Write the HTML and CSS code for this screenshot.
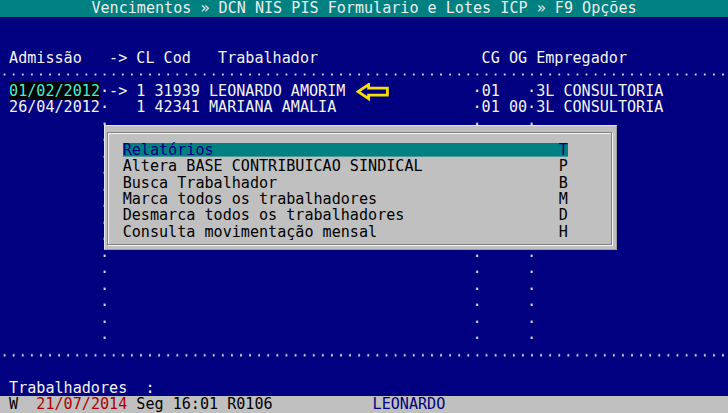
FILE: index.html
```html
<!DOCTYPE html>
<html lang="pt">
<head>
<meta charset="utf-8">
<title>Vencimentos</title>
<link rel="stylesheet" href="styles.css">
</head>
<body>
<div class="screen">
<div class="row title">Vencimentos » DCN NIS PIS Formulario e Lotes ICP » F9 Opções</div>
<div class="row"> </div>
<div class="row"> </div>
<div class="row"> Admissão   -&gt; CL Cod   Trabalhador                  CG OG Empregador</div>
<div class="row rule"></div>
<div class="row"> <span class="sel-date">01/02/2012</span>·-&gt; 1 31939 LEONARDO AMORIM              ·01   ·3L CONSULTORIA</div>
<div class="row"> 26/04/2012·   1 42341 MARIANA AMALIA               ·01 00·3L CONSULTORIA</div>
<div class="row dots">           ·                                        ·     ·</div>
<div class="row dots">           ·                                        ·     ·</div>
<div class="row dots">           ·                                        ·     ·</div>
<div class="row dots">           ·                                        ·     ·</div>
<div class="row dots">           ·                                        ·     ·</div>
<div class="row dots">           ·                                        ·     ·</div>
<div class="row dots">           ·                                        ·     ·</div>
<div class="row dots">           ·                                        ·     ·</div>
<div class="row dots">           ·                                        ·     ·</div>
<div class="row dots">           ·                                        ·     ·</div>
<div class="row dots">           ·                                        ·     ·</div>
<div class="row dots">           ·                                        ·     ·</div>
<div class="row dots">           ·                                        ·     ·</div>
<div class="row dots">           ·                                        ·     ·</div>
<div class="row rule"></div>
<div class="row"> </div>
<div class="row"> Trabalhadores  :</div>
<div class="row status"> W  <span class="st-date">21/07/2014</span> Seg 16:01 R0106           <span class="st-user">LEONARDO</span></div>

<svg class="pointer" width="34" height="18" viewBox="0 0 34 18" aria-hidden="true">
  <path d="M2 8.6 L12.6 1.6 L12.6 5.2 L31.4 5.2 L31.4 12.1 L12.6 12.1 L12.6 15.7 Z" fill="none" stroke="#f5e000" stroke-width="2.8" stroke-linejoin="miter"/>
</svg>

<div class="menu">
  <div class="frame">
    <div class="item selected"><span>Relatórios</span><span>T</span></div>
    <div class="item"><span>Altera BASE CONTRIBUICAO SINDICAL</span><span>P</span></div>
    <div class="item"><span>Busca Trabalhador</span><span>B</span></div>
    <div class="item"><span>Marca todos os trabalhadores</span><span>M</span></div>
    <div class="item"><span>Desmarca todos os trabalhadores</span><span>D</span></div>
    <div class="item"><span>Consulta movimentação mensal</span><span>H</span></div>
  </div>
</div>
</div>
</body>
</html>
```
FILE: styles.css
```css
html, body {
  margin: 0;
  padding: 0;
  background: #000080;
}

.screen {
  position: relative;
  width: 728px;
  height: 413px;
  overflow: hidden;
  background: #000080;
  color: #f4f4f4;
  font-family: "DejaVu Sans Mono", "Liberation Mono", monospace;
  font-size: 15.1px;
}

.row {
  height: 16.52px;
  line-height: 16.52px;
  white-space: pre;
}

.title {
  background: #008080;
  color: #eeeeee;
  text-align: center;
}

.dots {
  color: #dcdcf4;
}

.rule {
  background-image: radial-gradient(circle at 50% 50%, #dcdcf4 0, #dcdcf4 0.9px, rgba(220, 220, 244, 0) 1.4px);
  background-size: 9.1px 16.52px;
  background-repeat: repeat-x;
  background-position: 0 0;
}

.sel-date {
  background: #000000;
  color: #48ecd8;
}

.status {
  background: #c0c0c0;
  color: #000000;
}

.st-date {
  color: #a80000;
}

.st-user {
  color: #000080;
}

.pointer {
  position: absolute;
  left: 356px;
  top: 83px;
}

.menu {
  position: absolute;
  left: 104px;
  top: 125px;
  width: 513px;
  height: 125px;
  box-sizing: border-box;
  background: #c0c0c0;
  border: 1px solid;
  border-color: #e4e4e4 #a0a0a0 #a0a0a0 #e4e4e4;
  padding: 6px 4px 4px 2px;
}

.frame {
  height: 100%;
  box-sizing: border-box;
  border: 1px solid #808080;
  box-shadow: 1px 1px 0 #f4f4f4, inset 1px 1px 0 #f4f4f4;
  padding: 8.8px 0 0 14.7px;
}

.item {
  display: flex;
  justify-content: space-between;
  width: 49ch;
  height: 16.4px;
  line-height: 16.4px;
  white-space: pre;
  color: #000000;
}

.item.selected {
  color: #000080;
  background: linear-gradient(#008080, #008080) 0 1.5px / 100% 13.6px no-repeat;
}
```
